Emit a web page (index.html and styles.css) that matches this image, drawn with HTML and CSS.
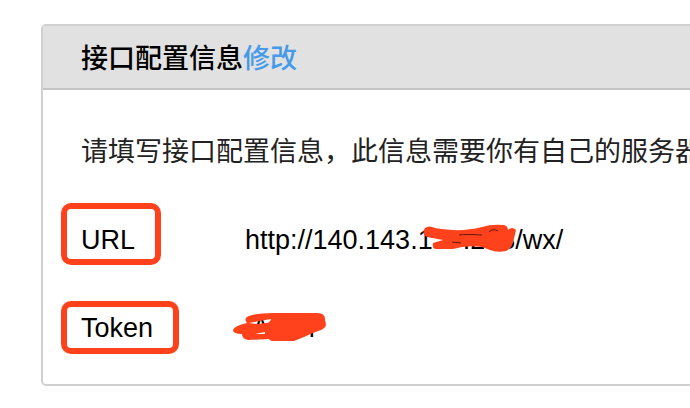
FILE: index.html
```
<!DOCTYPE html>
<html lang="zh-CN">
<head>
<meta charset="utf-8">
<title>接口配置信息</title>
<link rel="stylesheet" href="styles.css">
</head>
<body>
<section class="panel">
  <header class="panel-header">
    <h1 class="title">接口配置信息</h1><a class="edit" href="#">修改</a>
  </header>
  <div class="panel-body">
    <p class="hint">请填写接口配置信息，此信息需要你有自己的服务器</p>
    <dl class="fields">
      <div class="field">
        <dt class="name"><span class="mark mark-url">URL</span></dt>
        <dd class="value">http://140.143.<span class="covered">1&#8199;&#8199;.2&#8199;8<svg class="ink ink-url" viewBox="0 0 100 30" aria-hidden="true"><path d="M4 3Q8 0 14 3C32 6 45 6 61 2Q70-1 83 0Q87 1 87 5Q91 1 95 5L92 18Q90 24 85 26Q76 28 69 25L61 22Q45 20 32 24H15Q11 24 12 18L22 15L6 12Q0 9 4 3Z"/><path class="gap" d="M38 10Q46 9 61 10M31 17L40 18M68 7Q72 3 77 6"/></svg></span>/wx/</dd>
      </div>
      <div class="field">
        <dt class="name"><span class="mark mark-token">Token</span></dt>
        <dd class="value"><span class="covered">&#8197;A&#8199;&#8199;n<svg class="ink ink-token" viewBox="0 0 94 30" aria-hidden="true"><path fill-rule="evenodd" d="M16 3Q24 0 40 0H84Q92 0 92 6L93 12Q92 16 85 18Q77 21 71 24L61 28H41Q37 28 36 26L15 27Q9 26 9 21Q0 21 0 17Q1 13 14 10Q10 5 16 3ZM16 10L38 6Q37 10 33 10L24 11ZM22 21L32 19V21Z"/></svg></span></dd>
      </div>
    </dl>
  </div>
</section>
</body>
</html>
```

FILE: styles.css
```
* {
  box-sizing: border-box;
}

body {
  margin: 0;
  background: #fff;
  color: #000;
  font: 27px/32px "Liberation Sans", "Noto Sans CJK SC", sans-serif;
  overflow-x: hidden;
}

.panel {
  margin: 24px -8px 0 41px;
  border: 2px solid #d0d0d0;
  border-radius: 5px;
}

.panel-header {
  display: flex;
  align-items: center;
  padding: 15px 38px;
  background: #e1e1e1;
  border-bottom: 2px solid #c4c4c4;
}

.title,
.edit {
  margin: 0;
  font-size: 27px;
  font-weight: 500;
  font-family: "Noto Sans CJK SC", sans-serif;
}

.edit {
  color: #459ae9;
  text-decoration: none;
}

.panel-body {
  padding: 44px 0 30px 18px;
  overflow: hidden;
}

.hint {
  margin: 0 0 37px 20px;
  color: #222;
  font-family: "Noto Sans CJK SC", sans-serif;
  white-space: nowrap;
}

.fields {
  display: grid;
  gap: 36px;
  margin: 0;
}

.field {
  display: grid;
  grid-template-columns: 184px 1fr;
  align-items: baseline;
}

.name {
  display: flex;
}

.mark {
  padding: 5px 20px 4px 14px;
  border: 6px solid #ff421c;
  border-radius: 10px;
}

.mark-url {
  padding-top: 15px;
  padding-bottom: 3px;
}

.value {
  margin: 0;
  white-space: nowrap;
}

.covered {
  position: relative;
}

.ink {
  position: absolute;
  height: 30px;
  fill: #ff421c;
  overflow: visible;
}

.ink-url {
  top: 0;
  left: 3px;
  width: 100px;
}

.ink-token {
  top: 0;
  left: -12px;
  width: 94px;
}

.gap {
  fill: none;
  stroke: #5c1c10;
  stroke-width: 1;
}
```
